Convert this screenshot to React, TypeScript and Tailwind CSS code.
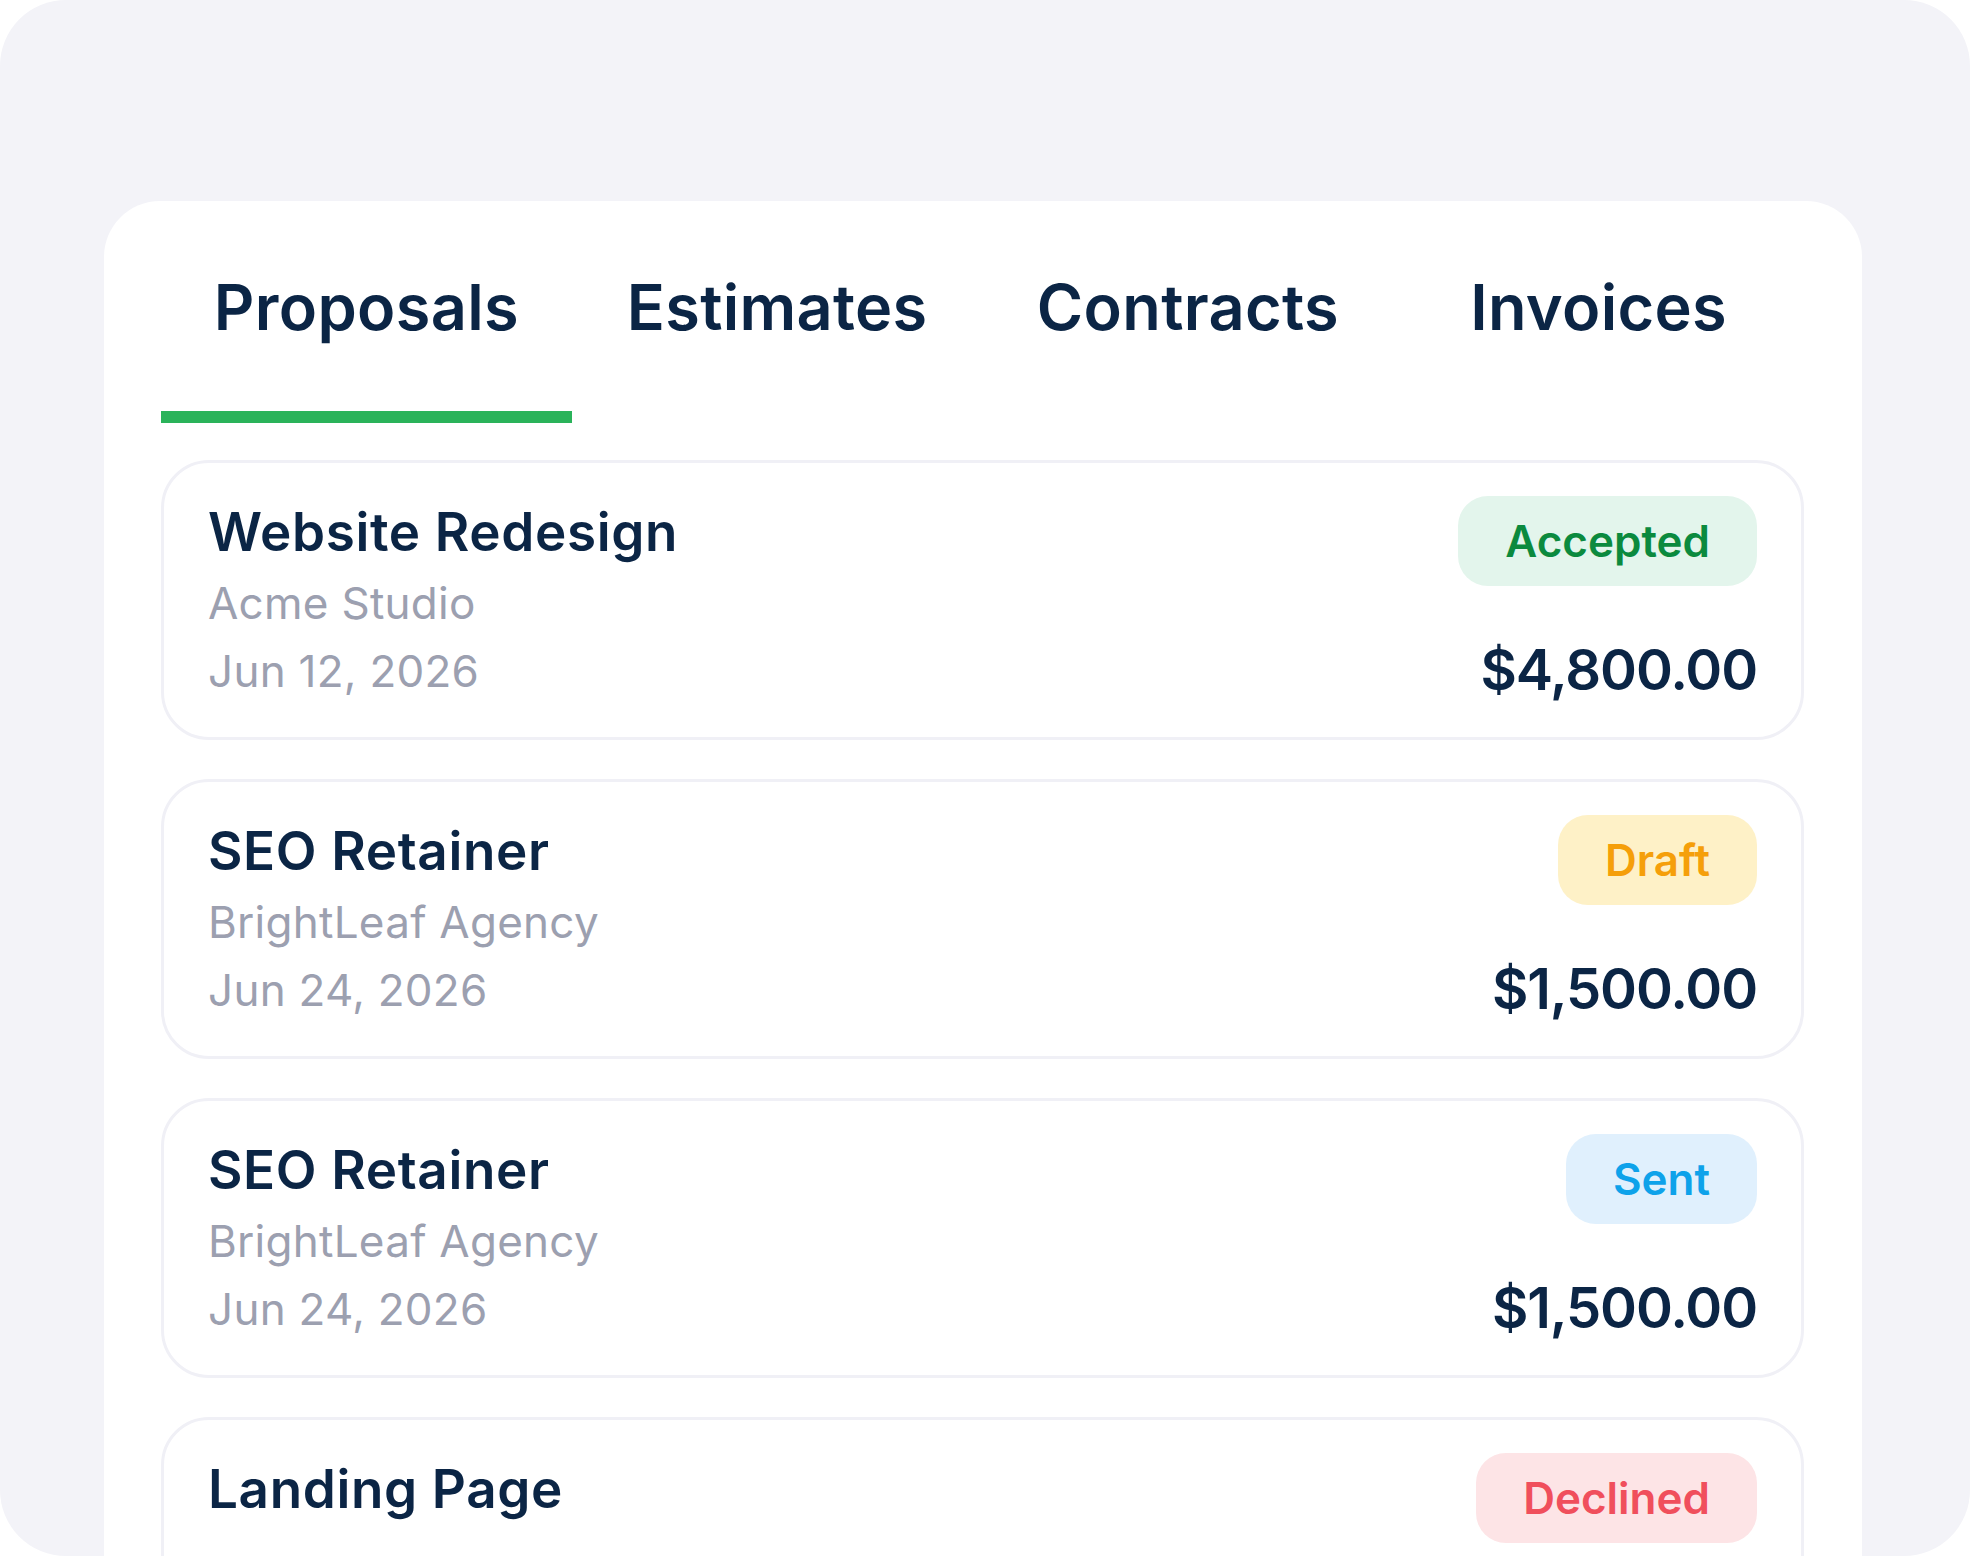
import { useState } from "react";

type Status = "Accepted" | "Draft" | "Sent" | "Declined";

interface Proposal {
  title: string;
  client?: string;
  date?: string;
  amount?: string;
  status: Status;
}

const tabs = ["Proposals", "Estimates", "Contracts", "Invoices"];

// last row is cut off by the frame, only its header shows
const proposals: Proposal[] = [
  { title: "Website Redesign", client: "Acme Studio", date: "Jun 12, 2026", amount: "$4,800.00", status: "Accepted" },
  { title: "SEO Retainer", client: "BrightLeaf Agency", date: "Jun 24, 2026", amount: "$1,500.00", status: "Draft" },
  { title: "SEO Retainer", client: "BrightLeaf Agency", date: "Jun 24, 2026", amount: "$1,500.00", status: "Sent" },
  { title: "Landing Page", status: "Declined" },
];

const badgeStyles: Record<Status, string> = {
  Accepted: "bg-[#e3f5ec] text-[#0b8a3e]",
  Draft: "bg-[#fef1c7] text-[#f59f0a]",
  Sent: "bg-[#e0f0fd] text-[#0ea2ea]",
  Declined: "bg-[#fde4e6] text-[#f04f5c]",
};

function StatusBadge({ status }: { status: Status }) {
  return (
    <span
      className={`flex h-[90px] items-center rounded-[30px] px-[47px] text-[44px] font-semibold leading-none ${badgeStyles[status]}`}
    >
      {status}
    </span>
  );
}

function ProposalCard({ item }: { item: Proposal }) {
  return (
    <div className="flex h-[280px] shrink-0 justify-between rounded-[48px] border-[3px] border-[#f0f0f6] bg-white px-[44px] pt-[33px]">
      <div className="mt-[2px] flex flex-col">
        <span className="text-[53px] font-semibold leading-[68px] tracking-[0.012em] text-[#0b2545]">{item.title}</span>
        {item.client && (
          <span className="mt-[3px] text-[44px] leading-[68px] tracking-[0.006em] text-[#9ca0b0]">{item.client}</span>
        )}
        {item.date && <span className="text-[44px] leading-[68px] tracking-[0.006em] text-[#9ca0b0]">{item.date}</span>}
      </div>
      <div className="flex flex-col items-end">
        <StatusBadge status={item.status} />
        {item.amount && (
          <span className="mt-[52px] text-[56px] font-semibold leading-[64px] tracking-[-0.02em] text-[#0b2545]">
            {item.amount}
          </span>
        )}
      </div>
    </div>
  );
}

export default function App() {
  const [active, setActive] = useState(0);

  return (
    <div className="h-[1556px] w-[1970px] bg-white" style={{ fontFamily: "Inter, 'Noto Sans', sans-serif" }}>
      <div className="h-full overflow-hidden rounded-[66px] bg-[#f3f3f8] pl-[104px] pr-[108px] pt-[201px]">
        <div className="h-full rounded-t-[56px] bg-white pl-[57px] pr-[58px] pt-[75px]">
          {/* tabs */}
          <div className="grid grid-cols-4">
            {tabs.map((tab, i) => (
              <button key={tab} onClick={() => setActive(i)} className="flex flex-col items-center">
                <span className="text-[63px] font-semibold leading-[63px] tracking-[0.005em] text-[#0b2545]">{tab}</span>
                <span className={`mt-[72px] h-[12px] w-full ${i === active ? "bg-[#2ab35a]" : "bg-transparent"}`} />
              </button>
            ))}
          </div>

          {/* list */}
          <div className="mt-[37px] flex flex-col gap-[39px]">
            {proposals.map((p, i) => (
              <ProposalCard key={i} item={p} />
            ))}
          </div>
        </div>
      </div>
    </div>
  );
}
